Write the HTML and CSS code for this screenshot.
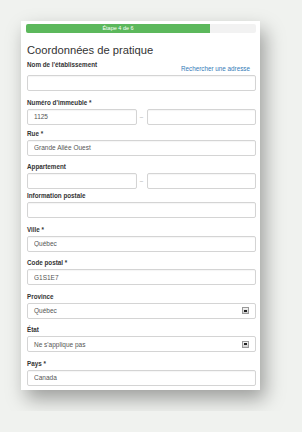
FILE: index.html
```html
<!DOCTYPE html>
<html lang="fr">
<head>
    <meta charset="UTF-8">
    <meta name="viewport" content="width=device-width, initial-scale=1.0">
    <title>Coordonnées de pratique</title>
    <link rel="stylesheet" href="styles.css">
</head>
<body>
    <div class="card">
        <div class="progress">
            <div class="progress-bar" style="width: 80%;">Étape 4 de 6</div>
        </div>

        <h1>Coordonnées de pratique</h1>

        <div class="field field-name">
            <div class="label-row">
                <label>Nom de l'établissement</label>
                <a href="#" class="search-link">Rechercher une adresse</a>
            </div>
            <input type="text" class="input">
        </div>

        <div class="field field-split">
            <label>Numéro d'immeuble *</label>
            <div class="split">
                <input type="text" class="input" value="1125">
                <span class="dash">–</span>
                <input type="text" class="input">
            </div>
        </div>

        <div class="field">
            <label>Rue *</label>
            <input type="text" class="input" value="Grande Allée Ouest">
        </div>

        <div class="field field-split field-tight">
            <label>Appartement</label>
            <div class="split">
                <input type="text" class="input">
                <span class="dash">–</span>
                <input type="text" class="input">
            </div>
        </div>

        <div class="field">
            <label>Information postale</label>
            <input type="text" class="input">
        </div>

        <div class="field">
            <label>Ville *</label>
            <input type="text" class="input" value="Québec">
        </div>

        <div class="field">
            <label>Code postal *</label>
            <input type="text" class="input" value="G1S1E7">
        </div>

        <div class="field">
            <label>Province</label>
            <div class="select">
                <span>Québec</span>
                <span class="select-arrow"></span>
            </div>
        </div>

        <div class="field">
            <label>État</label>
            <div class="select">
                <span>Ne s'applique pas</span>
                <span class="select-arrow"></span>
            </div>
        </div>

        <div class="field field-last">
            <label>Pays *</label>
            <input type="text" class="input" value="Canada">
        </div>
    </div>
</body>
</html>
```

FILE: styles.css
```css
body {
    font-family: "Liberation Sans", Arial, sans-serif;
    background-color: #f0f2ef;
    margin: 0;
    padding: 21px;
}

.card {
    background: white;
    width: 239px;
    box-sizing: border-box;
    padding: 3px 4px 4.5px 5px;
    box-shadow: 5px 9px 18px rgba(0, 0, 0, 0.35);
}

.progress {
    height: 9px;
    background-color: #f2f2f2;
    border-radius: 2px;
    overflow: hidden;
}

.progress-bar {
    height: 100%;
    background-color: #5cb85c;
    color: white;
    font-size: 5.5px;
    line-height: 9px;
    text-align: center;
}

h1 {
    font-size: 11.2px;
    font-weight: normal;
    color: #333;
    margin: 10px 0 0 1px;
    line-height: 14px;
}

.field {
    margin-bottom: 6.5px;
    padding-left: 1px;
}

.field-name {
    margin-top: 3px;
}

.field-split {
    margin-bottom: 4px;
}

.field-tight {
    margin-bottom: 2px;
}

.field-last {
    margin-bottom: 0;
}

label {
    display: block;
    font-size: 6.3px;
    font-weight: bold;
    color: #333;
    line-height: 9px;
    margin-bottom: 2px;
}

.label-row {
    display: flex;
    justify-content: space-between;
    align-items: flex-start;
    margin-bottom: 2px;
}

.label-row label {
    margin-bottom: 0;
}

.search-link {
    font-size: 6.3px;
    color: #337ab7;
    text-decoration: none;
    line-height: 9px;
    margin-top: 4px;
    margin-right: 6px;
}

.input {
    display: block;
    width: 100%;
    height: 16px;
    box-sizing: border-box;
    border: 1px solid #d4d4d4;
    border-radius: 2px;
    padding: 0 6px;
    font-family: inherit;
    font-size: 6.5px;
    color: #555;
    background: white;
    box-shadow: inset 0 1px 1px rgba(0, 0, 0, 0.04);
    margin: 0;
}

.split {
    display: grid;
    grid-template-columns: 1fr 10px 1fr;
    align-items: center;
}

.dash {
    font-size: 6px;
    color: #999;
    text-align: center;
}

.select {
    display: flex;
    justify-content: space-between;
    align-items: center;
    height: 16px;
    box-sizing: border-box;
    border: 1px solid #d4d4d4;
    border-radius: 2px;
    padding: 0 6px;
    font-size: 6.5px;
    color: #555;
}

.select-arrow {
    width: 7px;
    height: 7px;
    box-sizing: border-box;
    border: 1px solid #999;
    background: linear-gradient(#f4f4f4, #d0d0d0);
    display: flex;
    align-items: center;
    justify-content: center;
}

.select-arrow::after {
    content: "";
    width: 3px;
    height: 2px;
    background: #222;
}
```
